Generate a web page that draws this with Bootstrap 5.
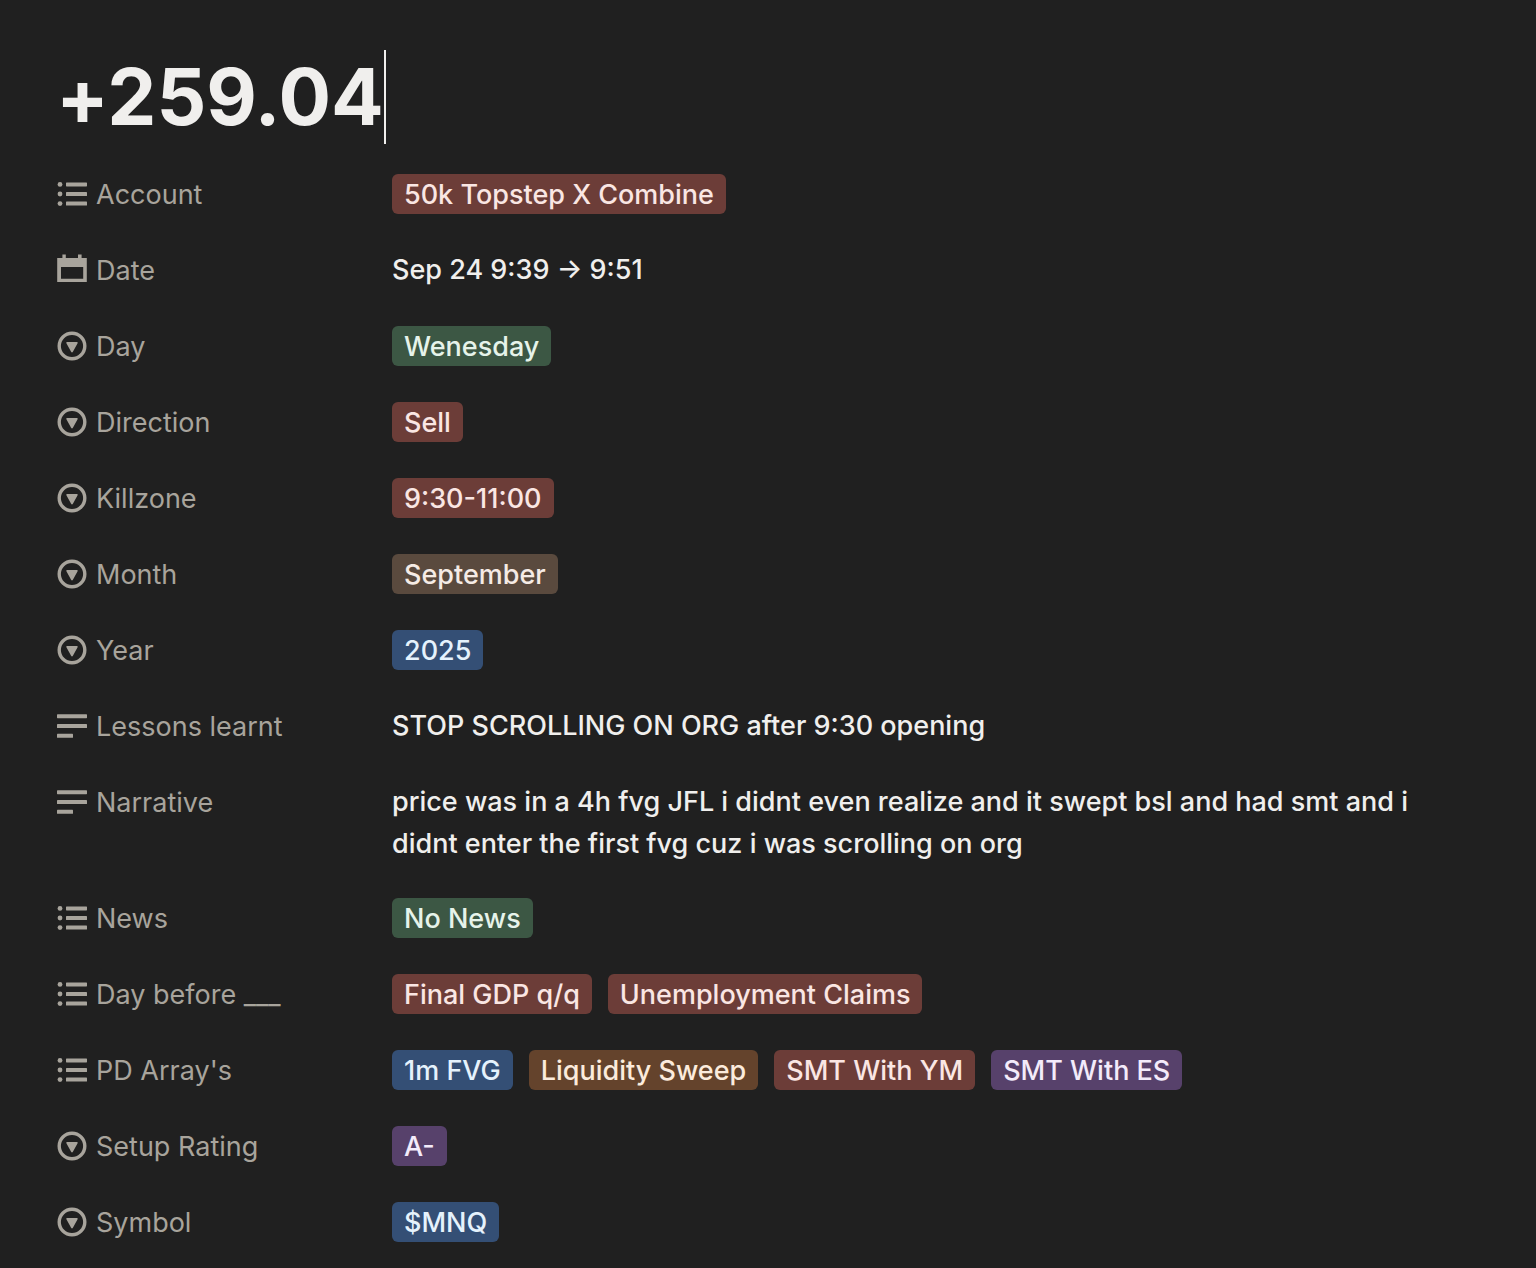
<!DOCTYPE html>
<html lang="en" data-bs-theme="dark">
<head>
<meta charset="utf-8">
<meta name="viewport" content="width=device-width, initial-scale=1">
<title>+259.04</title>
<link href="https://cdn.jsdelivr.net/npm/bootstrap@5.3.0/dist/css/bootstrap.min.css" rel="stylesheet">
<style>
  body { background: #202020; color: #f0efed; font-family: Inter, "Liberation Sans", sans-serif; font-size: 27px; line-height: 42px; }
  .entry { padding: 50px 96px 8px 56px; }
  .entry-title { color: #f0efed; font-size: 78px; line-height: 94px; font-weight: 700; font-variant-ligatures: no-contextual; }
  .caret { width: 2px; height: 94px; background: #f0efed; }
  .prop { min-height: 68px; }
  .prop-name { flex: 0 0 336px; padding: 14px 0 12px; color: #a8a49c; font-weight: 400; gap: 8px; }
  .prop-name svg { width: 32px; height: 32px; fill: currentColor; }
  .prop-value { padding: 13px 0 11px; min-width: 0; font-weight: 450; }
  .prop-tags { padding: 14px 0; column-gap: 16px; row-gap: 12px; font-weight: 450; }
  .tag { padding: 2px 12px 0; border-radius: 6px; line-height: 38px; white-space: nowrap; }
  .tag-red { background: #6c3d38; color: #fae6e3; }
  .tag-green { background: #3c5744; color: #e6f3ea; }
  .tag-brown { background: #5a4a3e; color: #f5ebe5; }
  .tag-blue { background: #344f75; color: #e5f2fc; }
  .tag-orange { background: #64432c; color: #fbebdc; }
  .tag-purple { background: #57416b; color: #f3ebfa; }
</style>
<script src="https://cdn.jsdelivr.net/npm/bootstrap@5.3.0/dist/js/bootstrap.bundle.min.js"></script>
</head>
<body>
<svg class="d-none" aria-hidden="true">
  <symbol id="i-list" viewBox="0 0 32 32">
    <circle cx="4" cy="6.4" r="2.4"/><circle cx="4" cy="16" r="2.4"/><circle cx="4" cy="25.6" r="2.4"/>
    <rect x="10" y="4.4" width="21" height="4" rx=".6"/><rect x="10" y="14" width="21" height="4" rx=".6"/><rect x="10" y="23.6" width="21" height="4" rx=".6"/>
  </symbol>
  <symbol id="i-date" viewBox="0 0 32 32">
    <path fill-rule="evenodd" d="M6.4 0.4h3.4v3.6h12.2v-3.6h3.6v3.6h5.2v24h-29.6v-24h5.2zM5 13v11.8h22.2v-11.8z"/>
  </symbol>
  <symbol id="i-select" viewBox="0 0 32 32">
    <circle cx="16" cy="16" r="12.8" fill="none" stroke="currentColor" stroke-width="3.4"/>
    <path d="M11.2 12h9.6q1.4 0 .8 1.2l-4.7 8.5q-.9 1.4-1.8 0l-4.7-8.5q-.6-1.2.8-1.2z"/>
  </symbol>
  <symbol id="i-text" viewBox="0 0 32 32">
    <rect x="1" y="4.2" width="30" height="4" rx=".6"/><rect x="1" y="14" width="30" height="4" rx=".6"/><rect x="1" y="23.8" width="16" height="4" rx=".6"/>
  </symbol>
</svg>
<main class="entry container-fluid">
  <h1 class="entry-title d-flex align-items-center mb-3">+259.04<span class="caret" aria-hidden="true"></span></h1>
  <dl class="d-flex flex-column gap-2 mb-0">
    <div class="prop d-flex"><dt class="prop-name d-flex align-items-start"><svg class="mt-1" aria-hidden="true"><use href="#i-list"/></svg>Account</dt><dd class="prop-tags d-flex flex-wrap mb-0"><span class="tag tag-red">50k Topstep X Combine</span></dd></div>
    <div class="prop d-flex"><dt class="prop-name d-flex align-items-start"><svg class="mt-1" aria-hidden="true"><use href="#i-date"/></svg>Date</dt><dd class="prop-value mb-0">Sep 24 9:39 → 9:51</dd></div>
    <div class="prop d-flex"><dt class="prop-name d-flex align-items-start"><svg class="mt-1" aria-hidden="true"><use href="#i-select"/></svg>Day</dt><dd class="prop-tags d-flex flex-wrap mb-0"><span class="tag tag-green">Wenesday</span></dd></div>
    <div class="prop d-flex"><dt class="prop-name d-flex align-items-start"><svg class="mt-1" aria-hidden="true"><use href="#i-select"/></svg>Direction</dt><dd class="prop-tags d-flex flex-wrap mb-0"><span class="tag tag-red">Sell</span></dd></div>
    <div class="prop d-flex"><dt class="prop-name d-flex align-items-start"><svg class="mt-1" aria-hidden="true"><use href="#i-select"/></svg>Killzone</dt><dd class="prop-tags d-flex flex-wrap mb-0"><span class="tag tag-red">9:30-11:00</span></dd></div>
    <div class="prop d-flex"><dt class="prop-name d-flex align-items-start"><svg class="mt-1" aria-hidden="true"><use href="#i-select"/></svg>Month</dt><dd class="prop-tags d-flex flex-wrap mb-0"><span class="tag tag-brown">September</span></dd></div>
    <div class="prop d-flex"><dt class="prop-name d-flex align-items-start"><svg class="mt-1" aria-hidden="true"><use href="#i-select"/></svg>Year</dt><dd class="prop-tags d-flex flex-wrap mb-0"><span class="tag tag-blue">2025</span></dd></div>
    <div class="prop d-flex"><dt class="prop-name d-flex align-items-start"><svg class="mt-1" aria-hidden="true"><use href="#i-text"/></svg>Lessons learnt</dt><dd class="prop-value mb-0">STOP SCROLLING ON ORG after 9:30 opening</dd></div>
    <div class="prop d-flex"><dt class="prop-name d-flex align-items-start"><svg class="mt-1" aria-hidden="true"><use href="#i-text"/></svg>Narrative</dt><dd class="prop-value mb-0">price was in a 4h fvg JFL i didnt even realize and it swept bsl and had smt and i didnt enter the first fvg cuz i was scrolling on org</dd></div>
    <div class="prop d-flex"><dt class="prop-name d-flex align-items-start"><svg class="mt-1" aria-hidden="true"><use href="#i-list"/></svg>News</dt><dd class="prop-tags d-flex flex-wrap mb-0"><span class="tag tag-green">No News</span></dd></div>
    <div class="prop d-flex"><dt class="prop-name d-flex align-items-start"><svg class="mt-1" aria-hidden="true"><use href="#i-list"/></svg>Day before ___</dt><dd class="prop-tags d-flex flex-wrap mb-0"><span class="tag tag-red">Final GDP q/q</span><span class="tag tag-red">Unemployment Claims</span></dd></div>
    <div class="prop d-flex"><dt class="prop-name d-flex align-items-start"><svg class="mt-1" aria-hidden="true"><use href="#i-list"/></svg>PD Array's</dt><dd class="prop-tags d-flex flex-wrap mb-0"><span class="tag tag-blue">1m FVG</span><span class="tag tag-orange">Liquidity Sweep</span><span class="tag tag-red">SMT With YM</span><span class="tag tag-purple">SMT With ES</span></dd></div>
    <div class="prop d-flex"><dt class="prop-name d-flex align-items-start"><svg class="mt-1" aria-hidden="true"><use href="#i-select"/></svg>Setup Rating</dt><dd class="prop-tags d-flex flex-wrap mb-0"><span class="tag tag-purple">A-</span></dd></div>
    <div class="prop d-flex"><dt class="prop-name d-flex align-items-start"><svg class="mt-1" aria-hidden="true"><use href="#i-select"/></svg>Symbol</dt><dd class="prop-tags d-flex flex-wrap mb-0"><span class="tag tag-blue">$MNQ</span></dd></div>
  </dl>
</main>
</body>
</html>
